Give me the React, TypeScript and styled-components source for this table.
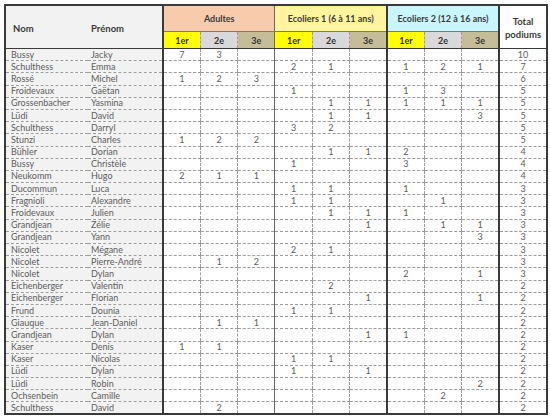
import React from 'react';
import styled, { createGlobalStyle } from 'styled-components';

const GlobalStyle = createGlobalStyle`
  html, body { margin: 0; padding: 0; background: #ffffff; }
  body { font-family: Lato, "Open Sans", "Liberation Sans", sans-serif; }
`;

type Edge = 'thick' | 'thin' | 'dashed';

const edgeCss = (e: Edge) =>
  e === 'thick' ? '2px solid #3a3a3a' : e === 'thin' ? '1px solid #6a6a6a' : '1px dashed #9c9c9c';

const Page = styled.div`
  padding: 4px 0 0 4px;
`;

const Sheet = styled.table`
  border-collapse: collapse;
  table-layout: fixed;
  width: 542px;
  border: 2px solid #3a3a3a;
  font-size: 9px;
  color: #5c5c5c;
`;

const HeadName = styled.th<{ $pad: number }>`
  background: #f2f2f2;
  text-align: left;
  padding: 2px 0 0 ${(p) => p.$pad}px;
  font-weight: 700;
  font-size: 9.5px;
  color: #3a3a3a;
  border-bottom: 1px solid #3a3a3a;
`;

const GroupHead = styled.th<{ $bg: string; $edge: Edge }>`
  height: 25px;
  padding: 0;
  background: ${(p) => p.$bg};
  border-left: ${(p) => edgeCss(p.$edge)};
  border-bottom: 1px solid #7a7a7a;
  font-weight: 700;
  font-size: 9px;
  color: #3a3a3a;
  text-align: center;
`;

const RankHead = styled.th<{ $bg: string; $edge: Edge }>`
  height: 16px;
  padding: 0;
  background: ${(p) => p.$bg};
  border-left: ${(p) => edgeCss(p.$edge)};
  border-bottom: 1px solid #3a3a3a;
  font-weight: 700;
  font-size: 9px;
  color: #333333;
  text-align: center;
`;

const TotalHead = styled.th`
  padding: 2px 0 0;
  background: #ffffff;
  border-left: 2px solid #3a3a3a;
  border-bottom: 1px solid #3a3a3a;
  font-weight: 700;
  font-size: 9.5px;
  line-height: 13px;
  color: #3a3a3a;
  text-align: center;
`;

const Row = styled.tr`
  height: 12.2px;
`;

const NameCell = styled.td<{ $pad: number }>`
  padding: 0 0 0 ${(p) => p.$pad}px;
  background: #f2f2f2;
  line-height: 10px;
  white-space: nowrap;
  overflow: hidden;
  border-bottom: 1px dashed #9c9c9c;
`;

const NumCell = styled.td<{ $edge: Edge }>`
  padding: 0;
  line-height: 10px;
  text-align: center;
  border-left: ${(p) => edgeCss(p.$edge)};
  border-bottom: 1px dashed #9c9c9c;
`;

const TotalCell = styled.td`
  padding: 0;
  line-height: 10px;
  text-align: center;
  border-left: 2px solid #3a3a3a;
  border-bottom: 1px dashed #9c9c9c;
`;

type R = [string, string, (number | null)[], number];
const _ = null;

const rows: R[] = [
  ['Bussy', 'Jacky', [7, 3, _, _, _, _, _, _, _], 10],
  ['Schulthess', 'Emma', [_, _, _, 2, 1, _, 1, 2, 1], 7],
  ['Rossé', 'Michel', [1, 2, 3, _, _, _, _, _, _], 6],
  ['Froidevaux', 'Gaëtan', [_, _, _, 1, _, _, 1, 3, _], 5],
  ['Grossenbacher', 'Yasmina', [_, _, _, _, 1, 1, 1, 1, 1], 5],
  ['Lüdi', 'David', [_, _, _, _, 1, 1, _, _, 3], 5],
  ['Schulthess', 'Darryl', [_, _, _, 3, 2, _, _, _, _], 5],
  ['Stunzi', 'Charles', [1, 2, 2, _, _, _, _, _, _], 5],
  ['Bühler', 'Dorian', [_, _, _, _, 1, 1, 2, _, _], 4],
  ['Bussy', 'Christèle', [_, _, _, 1, _, _, 3, _, _], 4],
  ['Neukomm', 'Hugo', [2, 1, 1, _, _, _, _, _, _], 4],
  ['Ducommun', 'Luca', [_, _, _, 1, 1, _, 1, _, _], 3],
  ['Fragnioli', 'Alexandre', [_, _, _, 1, 1, _, _, 1, _], 3],
  ['Froidevaux', 'Julien', [_, _, _, _, 1, 1, 1, _, _], 3],
  ['Grandjean', 'Zélie', [_, _, _, _, _, 1, _, 1, 1], 3],
  ['Grandjean', 'Yann', [_, _, _, _, _, _, _, _, 3], 3],
  ['Nicolet', 'Mégane', [_, _, _, 2, 1, _, _, _, _], 3],
  ['Nicolet', 'Pierre-André', [_, 1, 2, _, _, _, _, _, _], 3],
  ['Nicolet', 'Dylan', [_, _, _, _, _, _, 2, _, 1], 3],
  ['Eichenberger', 'Valentin', [_, _, _, _, 2, _, _, _, _], 2],
  ['Eichenberger', 'Florian', [_, _, _, _, _, 1, _, _, 1], 2],
  ['Frund', 'Dounia', [_, _, _, 1, 1, _, _, _, _], 2],
  ['Giauque', 'Jean-Daniel', [_, 1, 1, _, _, _, _, _, _], 2],
  ['Grandjean', 'Dylan', [_, _, _, _, _, 1, 1, _, _], 2],
  ['Kaser', 'Denis', [1, 1, _, _, _, _, _, _, _], 2],
  ['Kaser', 'Nicolas', [_, _, _, 1, 1, _, _, _, _], 2],
  ['Lüdi', 'Dylan', [_, _, _, 1, _, 1, _, _, _], 2],
  ['Lüdi', 'Robin', [_, _, _, _, _, _, _, _, 2], 2],
  ['Ochsenbein', 'Camille', [_, _, _, _, _, _, _, 2, _], 2],
  ['Schulthess', 'David', [_, 2, _, _, _, _, _, _, _], 2],
];

const groups: { label: string; bg: string; edge: Edge }[] = [
  { label: 'Adultes', bg: '#f8cbad', edge: 'thick' },
  { label: 'Ecoliers 1 (6 à 11 ans)', bg: '#fff59e', edge: 'thin' },
  { label: 'Ecoliers 2 (12 à 16 ans)', bg: '#c9f6fc', edge: 'thick' },
];

const ranks = [
  { label: '1er', bg: '#ffff00' },
  { label: '2e', bg: '#d9d9d9' },
  { label: '3e', bg: '#c4bd97' },
];

const colEdge = (i: number): Edge => {
  if (i % 3 !== 0) return 'dashed';
  return groups[i / 3].edge;
};

export default function App() {
  return (
    <>
      <GlobalStyle />
      <Page>
        <Sheet>
          <colgroup>
            <col style={{ width: 83 }} />
            <col style={{ width: 75 }} />
            {Array.from({ length: 9 }).map((_, i) => (
              <col key={i} style={{ width: 37.33 }} />
            ))}
            <col style={{ width: 48 }} />
          </colgroup>
          <thead>
            <tr>
              <HeadName rowSpan={2} $pad={7}>Nom</HeadName>
              <HeadName rowSpan={2} $pad={3}>Prénom</HeadName>
              {groups.map((g) => (
                <GroupHead key={g.label} colSpan={3} $bg={g.bg} $edge={g.edge}>
                  {g.label}
                </GroupHead>
              ))}
              <TotalHead rowSpan={2}>
                Total
                <br />
                podiums
              </TotalHead>
            </tr>
            <tr>
              {groups.map((g, gi) =>
                ranks.map((r, ri) => (
                  <RankHead key={`${gi}-${ri}`} $bg={r.bg} $edge={colEdge(gi * 3 + ri)}>
                    {r.label}
                  </RankHead>
                ))
              )}
            </tr>
          </thead>
          <tbody>
            {rows.map(([nom, prenom, vals, total], ri) => (
              <Row key={ri}>
                <NameCell $pad={5}>{nom}</NameCell>
                <NameCell $pad={3}>{prenom}</NameCell>
                {vals.map((v, ci) => (
                  <NumCell key={ci} $edge={colEdge(ci)}>
                    {v ?? ''}
                  </NumCell>
                ))}
                <TotalCell>{total}</TotalCell>
              </Row>
            ))}
          </tbody>
        </Sheet>
      </Page>
    </>
  );
}
